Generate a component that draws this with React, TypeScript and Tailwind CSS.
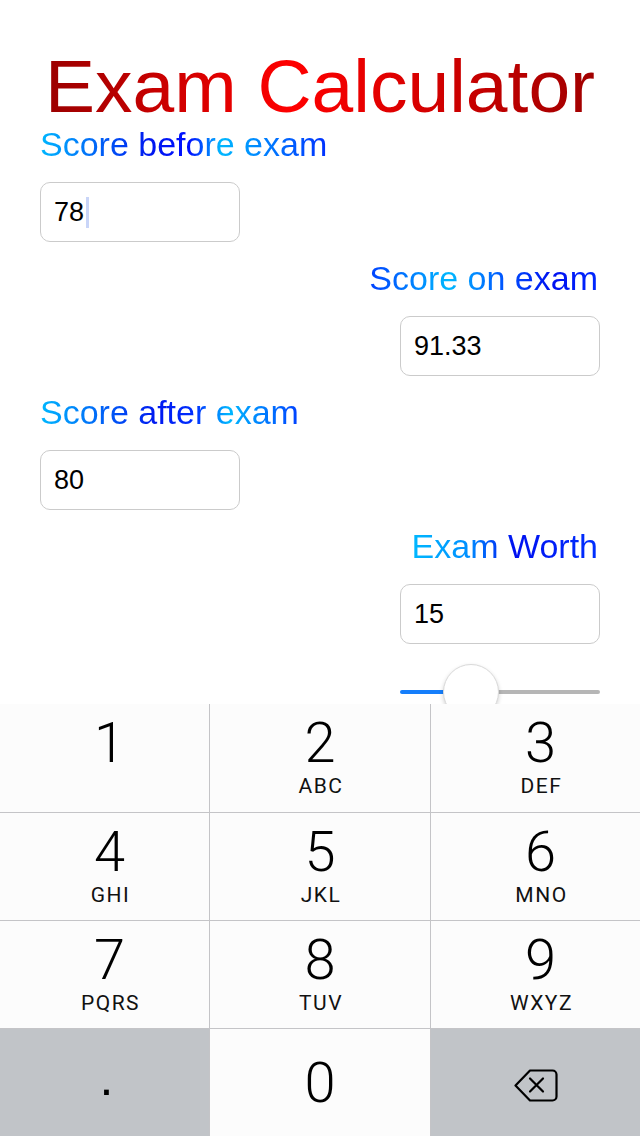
import React from "react";

type TField = {
  label: string;
  value: string;
  align: "left" | "right";
  gradient: string;
  caret?: boolean;
};

const fields: TField[] = [
  {
    label: "Score before exam",
    value: "78",
    align: "left",
    gradient:
      "bg-[linear-gradient(90deg,#00b8ff_0%,#0018f0_38%,#0010ff_52%,#00b8ff_63%,#0030ff_100%)]",
    caret: true,
  },
  {
    label: "Score on exam",
    value: "91.33",
    align: "right",
    gradient:
      "bg-[linear-gradient(90deg,#0040ff_0%,#00b8ff_35%,#0058ff_58%,#0010f0_80%,#0028ff_100%)]",
  },
  {
    label: "Score after exam",
    value: "80",
    align: "left",
    gradient:
      "bg-[linear-gradient(90deg,#00b8ff_0%,#0018f0_45%,#0030ff_60%,#00b8ff_73%,#0040ff_100%)]",
  },
  {
    label: "Exam Worth",
    value: "15",
    align: "right",
    gradient:
      "bg-[linear-gradient(90deg,#00b8ff_0%,#0090ff_30%,#0010f0_55%,#0030ff_100%)]",
  },
];

const keys = [
  { digit: "1", letters: "" },
  { digit: "2", letters: "ABC" },
  { digit: "3", letters: "DEF" },
  { digit: "4", letters: "GHI" },
  { digit: "5", letters: "JKL" },
  { digit: "6", letters: "MNO" },
  { digit: "7", letters: "PQRS" },
  { digit: "8", letters: "TUV" },
  { digit: "9", letters: "WXYZ" },
];

function Field({ field, first }: { field: TField; first: boolean }) {
  const isRight = field.align === "right";
  return (
    <div className={`flex shrink-0 flex-col ${isRight ? "items-end" : "items-start"} ${first ? "mt-0" : "mt-[16px]"}`}>
      <div
        className={`inline-block h-[40px] leading-[40px] text-[34px] bg-clip-text text-transparent ${field.gradient} ${isRight ? "mr-[2px]" : ""}`}
      >
        {field.label}
      </div>
      <div className="mt-[18px] flex h-[60px] w-[200px] items-center rounded-[10px] border border-[#cbcbcb] bg-white pl-[13px] text-[27px] text-black">
        <span>{field.value}</span>
        {field.caret ? <span className="ml-[2px] inline-block h-[31px] w-[3px] bg-[#c9d5f8]" /> : null}
      </div>
    </div>
  );
}

function Slider() {
  return (
    <div className="relative mt-[20px] flex h-[56px] w-[200px] shrink-0 items-center self-end">
      <div className="flex h-[4px] w-full">
        <div className="h-full w-[46px] rounded-l-full bg-[#157efb]" />
        <div className="h-full flex-1 rounded-r-full bg-[#b6b6b6]" />
      </div>
      <div className="absolute left-[43px] top-0 h-[56px] w-[56px] rounded-full border border-[#dadada] bg-white shadow-[0_2px_4px_rgba(0,0,0,0.18)]" />
    </div>
  );
}

function DeleteIcon() {
  return (
    <svg width="44" height="33" viewBox="0 0 44 33" fill="none" stroke="#000" strokeWidth="2.2" strokeLinejoin="round" strokeLinecap="round">
      <path d="M16 1.5 H38.5 a4 4 0 0 1 4 4 V27.5 a4 4 0 0 1 -4 4 H16 L1.5 16.5 Z" />
      <path d="M16 9.5 L29 22.5 M29 9.5 L16 22.5" />
    </svg>
  );
}

function Keyboard() {
  return (
    <div className="grid h-[432px] shrink-0 grid-cols-[209px_220px_209px] grid-rows-[108px_107px_107px_107px] gap-px bg-[#c4c4c7]">
      {keys.map((key, i) => (
        <div
          key={key.digit}
          className={`flex flex-col items-center bg-[#fcfcfc] pt-[11px] text-black ${i % 3 === 1 ? "" : "pl-[10px]"}`}
        >
          <div className="h-[56px] font-['Roboto',sans-serif] text-[56px] font-light leading-[56px]">{key.digit}</div>
          {key.letters ? (
            <div className="mt-[5px] h-[21px] pl-[2px] font-['Roboto',sans-serif] text-[21px] leading-[21px] tracking-[1.5px] text-[#111]">
              {key.letters}
            </div>
          ) : null}
        </div>
      ))}
      <div className="flex items-center justify-center bg-[#c1c4c8]">
        <span className="mb-[10px] ml-[4px] text-[50px] leading-[50px] text-black">.</span>
      </div>
      <div className="flex items-center justify-center bg-[#fcfcfc]">
        <span className="font-['Roboto',sans-serif] text-[56px] font-light leading-[56px] text-black">0</span>
      </div>
      <div className="flex items-center justify-center bg-[#c1c4c8]">
        <div className="mt-[5px]">
          <DeleteIcon />
        </div>
      </div>
    </div>
  );
}

export default function App() {
  return (
    <div className="flex h-[1136px] w-[640px] flex-col overflow-hidden bg-white font-['Liberation_Sans',Arial,sans-serif]">
      <div className="flex h-[704px] shrink-0 flex-col overflow-hidden px-[40px]">
        <h1 className="mt-[49px] h-[75px] shrink-0 self-center bg-[linear-gradient(90deg,#9a0000_0%,#ff0000_45%,#a00000_100%)] bg-clip-text text-center text-[75px] leading-[75px] text-transparent">
          Exam Calculator
        </h1>
        {fields.map((field, i) => (
          <Field key={field.label} field={field} first={i === 0} />
        ))}
        <Slider />
      </div>
      <Keyboard />
    </div>
  );
}
